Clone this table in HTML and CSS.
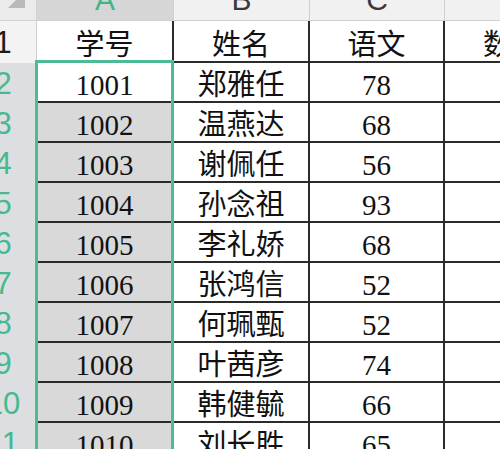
FILE: index.html
```html
<!DOCTYPE html>
<html lang="zh">
<head>
<meta charset="utf-8">
<title>成绩表</title>
<link rel="stylesheet" href="styles.css">
</head>
<body>
<div class="sheet">
  <div class="corner"><span class="tri"></span></div>
  <div class="colhead sel">A</div>
  <div class="colhead">B</div>
  <div class="colhead">C</div>
  <div class="colhead">D</div>

  <div class="rowhead first">1</div>
  <div class="cell head">学号</div>
  <div class="cell head">姓名</div>
  <div class="cell head">语文</div>
  <div class="cell head">数学</div>

  <div class="rowhead">2</div>
  <div class="cell active">1001</div><div class="cell">郑雅任</div><div class="cell">78</div><div class="cell dnum">85</div>
  <div class="rowhead">3</div>
  <div class="cell shade">1002</div><div class="cell">温燕达</div><div class="cell">68</div><div class="cell dnum">79</div>
  <div class="rowhead">4</div>
  <div class="cell shade">1003</div><div class="cell">谢佩任</div><div class="cell">56</div><div class="cell dnum">92</div>
  <div class="rowhead">5</div>
  <div class="cell shade">1004</div><div class="cell">孙念祖</div><div class="cell">93</div><div class="cell dnum">60</div>
  <div class="rowhead">6</div>
  <div class="cell shade">1005</div><div class="cell">李礼娇</div><div class="cell">68</div><div class="cell dnum">77</div>
  <div class="rowhead">7</div>
  <div class="cell shade">1006</div><div class="cell">张鸿信</div><div class="cell">52</div><div class="cell dnum">88</div>
  <div class="rowhead">8</div>
  <div class="cell shade">1007</div><div class="cell">何珮甄</div><div class="cell">52</div><div class="cell dnum">95</div>
  <div class="rowhead">9</div>
  <div class="cell shade">1008</div><div class="cell">叶茜彦</div><div class="cell">74</div><div class="cell dnum">71</div>
  <div class="rowhead">10</div>
  <div class="cell shade">1009</div><div class="cell">韩健毓</div><div class="cell">66</div><div class="cell dnum">83</div>
  <div class="rowhead">11</div>
  <div class="cell shade">1010</div><div class="cell">刘长胜</div><div class="cell">65</div><div class="cell dnum">90</div>

  <div class="selection"></div>
</div>
</body>
</html>
```
FILE: styles.css
```css
html, body {
  margin: 0;
  padding: 0;
  background: #ffffff;
}
body {
  width: 500px;
  height: 449px;
  overflow: hidden;
}
.sheet {
  position: relative;
  margin: -15px 0 0 -30px;
  display: grid;
  grid-template-columns: 67px 137px 136px 135px 136px;
  grid-template-rows: 36px 42px repeat(10, 40px);
  width: 611px;
}
.corner {
  background: #ebebeb;
  border-right: 1px solid #d2d2d2;
  border-bottom: 1px solid #d2d2d2;
  box-sizing: border-box;
  display: flex;
  justify-content: flex-end;
  align-items: flex-end;
  padding: 0 11px 12px 0;
}
.tri {
  width: 0;
  height: 0;
  border-left: 17px solid transparent;
  border-bottom: 17px solid #b9b9b9;
}
.colhead {
  background: #f1f1f1;
  border-right: 1px solid #d0d0d0;
  border-bottom: 1px solid #d0d0d0;
  box-sizing: border-box;
  font-family: "Liberation Sans", "Noto Sans", sans-serif;
  font-size: 30px;
  line-height: 30px;
  color: #3a3a3a;
  text-align: center;
}
.colhead.sel {
  background: #d6d6d6;
  color: #3fb48c;
}
.rowhead {
  background: #dddee2;
  border-right: 1px solid #cfcfcf;
  box-sizing: border-box;
  font-family: "Liberation Sans", "Noto Sans", sans-serif;
  font-size: 31px;
  line-height: 31px;
  color: #45b990;
  display: flex;
  justify-content: center;
  align-items: center;
}
.rowhead.first {
  background: #f3f3f3;
  color: #1c1c1c;
}
.cell {
  box-sizing: border-box;
  border-right: 2px solid #2b2b2b;
  border-bottom: 2px solid #2b2b2b;
  font-family: "Liberation Serif", "Noto Sans CJK SC", serif;
  font-size: 29px;
  line-height: 32px;
  color: #111111;
  display: flex;
  justify-content: center;
  align-items: center;
  padding-top: 6px;
  white-space: nowrap;
}
.cell.head {
  padding-top: 8px;
}
.cell.dnum {
  padding-left: 8px;
}
.cell.shade {
  background: #d9d9d9;
}
.selection {
  position: absolute;
  left: 65px;
  top: 75px;
  width: 139px;
  height: 520px;
  box-sizing: border-box;
  border: 3px solid #4dbb96;
  pointer-events: none;
}
```
